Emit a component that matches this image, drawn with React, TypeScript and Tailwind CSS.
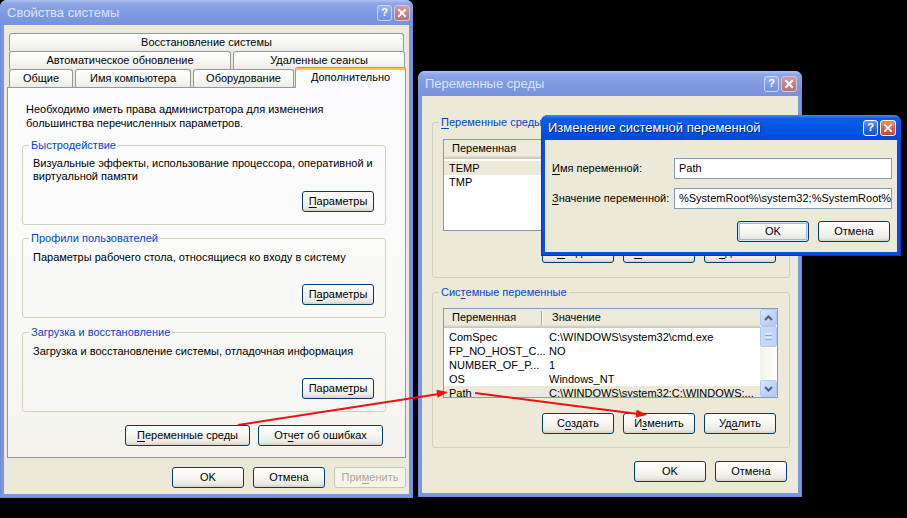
import type { ReactNode } from 'react'

// Windows XP style "System Properties" + "Environment Variables" screenshot recreation

function U({ children }: { children: ReactNode }) {
  return <span className="underline decoration-1 underline-offset-[2px]">{children}</span>
}

interface BtnProps {
  children: ReactNode
  className?: string
  disabled?: boolean
  isDefault?: boolean
}

function XpButton({ children, className = '', disabled = false, isDefault = false }: BtnProps) {
  const skin = disabled
    ? 'border-[#c9c7ba] bg-[#f5f4ea] text-[#aca899]'
    : 'border-[#003c74] bg-[linear-gradient(180deg,#ffffff_0%,#f5f4ef_55%,#ebe9e1_85%,#d6d0c5_100%)] text-black'
  const ring = isDefault ? 'shadow-[inset_0_0_0_1px_#cee7ff,inset_0_0_0_2px_#98b8ea]' : ''
  return (
    <div
      className={`flex h-[21px] shrink-0 items-center justify-center rounded-[3px] border ${skin} ${ring} ${className}`}
    >
      <span>{children}</span>
    </div>
  )
}

function TitleButtons({ active }: { active: boolean }) {
  const help = active
    ? 'border-white bg-[linear-gradient(180deg,#5f93f5_0%,#2a64e2_60%,#1d52d2_100%)]'
    : 'border-[#c9d5f5] bg-[linear-gradient(180deg,#9db4f0_0%,#7d99e5_60%,#7590e0_100%)]'
  const close = active
    ? 'border-white bg-[linear-gradient(180deg,#f08a6c_0%,#e0573a_60%,#cc4325_100%)]'
    : 'border-[#dcc4cc] bg-[linear-gradient(180deg,#d79ca3_0%,#c47b84_60%,#bb717b_100%)]'
  return (
    <div className="flex gap-[2px]">
      <div
        className={`flex h-[16px] w-[15px] items-center justify-center rounded-[3px] border text-[11px] font-bold leading-none text-white ${help}`}
      >
        ?
      </div>
      <div className={`flex h-[16px] w-[16px] items-center justify-center rounded-[3px] border ${close}`}>
        <svg width="10" height="10" viewBox="0 0 10 10">
          <path d="M2 2 L8 8 M8 2 L2 8" stroke="white" strokeWidth="2" strokeLinecap="square" />
        </svg>
      </div>
    </div>
  )
}

interface WindowProps {
  title: string
  active?: boolean
  className?: string
  btnPad?: string
  children: ReactNode
}

function XpWindow({ title, active = false, className = '', btnPad = 'pr-[5px]', children }: WindowProps) {
  const frame = active ? 'bg-[#0a4ee0] shadow-[inset_0_0_0_1px_#0831d9]' : 'bg-[#7a96df] shadow-[inset_0_0_0_1px_#6f8bd9]'
  const bar = active
    ? 'bg-[linear-gradient(180deg,#3d8cf5_0%,#0a5ee8_14%,#0055e5_55%,#004bdc_90%,#0a46d0_100%)]'
    : 'bg-[linear-gradient(180deg,#b0c2f2_0%,#8ea6e7_14%,#7e99e1_55%,#7893de_100%)]'
  const titleText = active ? 'text-white [text-shadow:1px_1px_#0a1883]' : 'text-[#d8e4f8]'
  return (
    <div className={`absolute flex flex-col rounded-t-[7px] ${frame} ${className}`}>
      <div className={`flex h-[25px] shrink-0 items-center justify-between rounded-t-[7px] pl-[7px] ${btnPad} ${bar}`}>
        <span className={`text-[13px] leading-none ${titleText}`}>{title}</span>
        <TitleButtons active={active} />
      </div>
      <div className="mx-[4px] mb-[4px] flex flex-1 flex-col bg-[#ece9d8]">{children}</div>
    </div>
  )
}

function Tab({ children, className = '' }: { children: ReactNode; className?: string }) {
  return (
    <div
      className={`flex h-[18px] shrink-0 items-center justify-center rounded-t-[3px] border-x border-t border-[#919b9c] bg-[linear-gradient(180deg,#ffffff_0%,#f7f6f2_60%,#ecebe6_100%)] ${className}`}
    >
      {children}
    </div>
  )
}

function Group({ label, className = '', children }: { label: ReactNode; className?: string; children: ReactNode }) {
  return (
    <fieldset className={`flex flex-col rounded-[3px] border border-[#d0d0bf] pl-[10px] pr-[11px] ${className}`}>
      <legend className="ml-[-4px] px-[2px] leading-[14px] text-[#0046d5]">{label}</legend>
      {children}
    </fieldset>
  )
}

function ScrollArrow({ up }: { up: boolean }) {
  return (
    <div className="flex h-[17px] w-[17px] shrink-0 items-center justify-center rounded-[2px] border border-[#b4c8f6] bg-[linear-gradient(135deg,#dce7fd_0%,#c3d4fb_50%,#b3c8f5_100%)]">
      <svg width="9" height="6" viewBox="0 0 9 6">
        <path d={up ? 'M1 5 L4.5 1.5 L8 5' : 'M1 1 L4.5 4.5 L8 1'} stroke="#4d6185" strokeWidth="2" fill="none" />
      </svg>
    </div>
  )
}

function ScrollBar() {
  return (
    <div className="flex w-[17px] shrink-0 flex-col bg-[linear-gradient(90deg,#f3f1ec_0%,#fefefb_100%)]">
      <ScrollArrow up />
      <div className="flex h-[21px] shrink-0 flex-col items-center justify-center gap-[1px] rounded-[2px] border border-[#b4c8f6] bg-[linear-gradient(90deg,#cad8fc_0%,#c1d3fb_100%)]">
        <div className="h-[1px] w-[7px] bg-[#eef4fe]" />
        <div className="h-[1px] w-[7px] bg-[#8ca7e6]" />
        <div className="h-[1px] w-[7px] bg-[#eef4fe]" />
        <div className="h-[1px] w-[7px] bg-[#8ca7e6]" />
      </div>
      <div className="flex-1" />
      <ScrollArrow up={false} />
    </div>
  )
}

interface ListProps {
  rows: [string, string][]
  selected: number
  className?: string
  scroll?: boolean
}

function ListView({ rows, selected, className = '', scroll = false }: ListProps) {
  return (
    <div className={`flex overflow-hidden border border-[#7f9db9] bg-white ${className}`}>
      <div className="flex min-w-0 flex-1 flex-col">
        <div className="flex h-[19px] shrink-0 items-center bg-[#ebeadb] shadow-[inset_0_-1px_#cbc7b8,inset_0_-2px_#d6d2c2,inset_0_-3px_#e2decd]">
          <div className="flex h-full w-[97px] shrink-0 items-center pb-[2px] pl-[8px]">Переменная</div>
          <div className="mb-[2px] h-[14px] w-[1px] bg-[#aca899]" />
          <div className="mb-[2px] h-[14px] w-[1px] bg-white" />
          <div className="flex h-full flex-1 items-center pb-[2px] pl-[9px]">Значение</div>
        </div>
        <div className="flex flex-col pt-[2px]">
          {rows.map(([name, value], i) => (
            <div
              key={name}
              className={`flex h-[14px] shrink-0 items-center whitespace-nowrap ${i === selected ? 'bg-[#ece9d8]' : ''}`}
            >
              <div className="w-[99px] shrink-0 pl-[5px]">{name}</div>
              <div className="min-w-0 flex-1 overflow-hidden pl-[6px]">{value}</div>
            </div>
          ))}
        </div>
      </div>
      {scroll && <ScrollBar />}
    </div>
  )
}

function TextBox({ children }: { children: ReactNode }) {
  return (
    <div className="flex h-[21px] w-[218px] shrink-0 items-center overflow-hidden whitespace-nowrap border border-[#7f9db9] bg-white pl-[4px]">
      {children}
    </div>
  )
}

const userRows: [string, string][] = [
  ['TEMP', '%USERPROFILE%\\Local Settings\\Temp'],
  ['TMP', '%USERPROFILE%\\Local Settings\\Temp']
]

const systemRows: [string, string][] = [
  ['ComSpec', 'C:\\WINDOWS\\system32\\cmd.exe'],
  ['FP_NO_HOST_C...', 'NO'],
  ['NUMBER_OF_P...', '1'],
  ['OS', 'Windows_NT'],
  ['Path', 'C:\\WINDOWS\\system32;C:\\WINDOWS;...']
]

export default function App() {
  return (
    <div className="relative h-[518px] w-[907px] overflow-hidden bg-black font-['Liberation_Sans',Arial,sans-serif] text-[11px] leading-[13px] text-black">
      {/* Свойства системы */}
      <XpWindow title="Свойства системы" className="left-0 top-0 h-[498px] w-[413px]" btnPad="pr-[3px]">
        <div className="flex flex-col px-[3px] pt-[8px]">
          <div className="flex flex-col">
            <div className="flex h-[18px]">
              <Tab className="ml-[2px] w-[395px]">Восстановление системы</Tab>
            </div>
            <div className="flex h-[18px] gap-[2px]">
              <Tab className="ml-[2px] w-[222px]">Автоматическое обновление</Tab>
              <Tab className="w-[172px]">Удаленные сеансы</Tab>
            </div>
            <div className="flex h-[18px] items-end gap-[2px]">
              <Tab className="ml-[2px] w-[64px]">Общие</Tab>
              <Tab className="w-[116px]">Имя компьютера</Tab>
              <Tab className="w-[101px]">Оборудование</Tab>
              <div className="relative z-10 -mb-[1px] ml-[-1px] flex h-[21px] w-[111px] items-start justify-center rounded-t-[3px] border-x border-t border-x-[#919b9c] border-t-[#e68b2c] bg-[#fcfcfe] pt-[3px] shadow-[inset_0_2px_#ffc83c]">
                Дополнительно
              </div>
            </div>
          </div>
          <div className="flex h-[371px] flex-col border border-[#919b9c] bg-[linear-gradient(180deg,#fcfcfe_0%,#f9f9f7_60%,#f4f3ee_100%)] pl-[14px] pt-[14px]">
            <p className="pl-[4px] leading-[14px]">
              Необходимо иметь права администратора для изменения
              <br />
              большинства перечисленных параметров.
            </p>
            <Group label="Быстродействие" className="mt-[8px] w-[364px] pb-[12px]">
              <p className="mt-[5px]">
                Визуальные эффекты, использование процессора, оперативной и
                <br />
                виртуальной памяти
              </p>
              <XpButton className="mt-[8px] w-[72px] self-end">
                <U>П</U>араметры
              </XpButton>
            </Group>
            <Group label="Профили пользователей" className="mt-[6px] w-[364px] pb-[12px]">
              <p className="mt-[6px]">Параметры рабочего стола, относящиеся ко входу в систему</p>
              <XpButton className="mt-[20px] w-[72px] self-end">
                П<U>а</U>раметры
              </XpButton>
            </Group>
            <Group label="Загрузка и восстановление" className="mt-[7px] w-[364px] pb-[12px]">
              <p className="mt-[6px]">Загрузка и восстановление системы, отладочная информация</p>
              <XpButton className="mt-[20px] w-[72px] self-end">
                Параме<U>т</U>ры
              </XpButton>
            </Group>
            <div className="mt-[13px] flex justify-end gap-[8px] pr-[22px]">
              <XpButton className="w-[125px]">
                <U>П</U>еременные среды
              </XpButton>
              <XpButton className="w-[125px]">
                От<U>ч</U>ет об ошибках
              </XpButton>
            </div>
          </div>
          <div className="mt-[9px] flex justify-end gap-[9px]">
            <XpButton className="w-[72px]">OK</XpButton>
            <XpButton className="w-[72px]">Отмена</XpButton>
            <XpButton className="w-[72px]" disabled>
              При<U>м</U>енить
            </XpButton>
          </div>
        </div>
      </XpWindow>

      {/* Переменные среды */}
      <XpWindow title="Переменные среды" className="left-[418px] top-[71px] h-[426px] w-[384px]">
        <div className="flex flex-col pl-[10px] pr-[8px]">
          <Group
            label={
              <>
                <U>П</U>еременные среды пользователя для Admin
              </>
            }
            className="mt-[19px] pb-[14px]"
          >
            <ListView rows={userRows} selected={0} className="mt-[10px] h-[92px]" />
            <div className="mt-[11px] flex justify-end gap-[9px] pr-[2px]">
              <XpButton className="w-[72px]">
                <U>С</U>оздать
              </XpButton>
              <XpButton className="w-[72px]">
                <U>И</U>зменить
              </XpButton>
              <XpButton className="w-[72px]">
                <U>У</U>далить
              </XpButton>
            </div>
          </Group>
          <Group
            label={
              <>
                Сис<U>т</U>емные переменные
              </>
            }
            className="mt-[7px] pb-[13px]"
          >
            <ListView rows={systemRows} selected={4} scroll className="mt-[9px] h-[90px]" />
            <div className="mt-[15px] flex justify-end gap-[9px] pr-[2px]">
              <XpButton className="w-[72px]">
                С<U>о</U>здать
              </XpButton>
              <XpButton className="w-[72px]">
                И<U>з</U>менить
              </XpButton>
              <XpButton className="w-[72px]">
                Уд<U>а</U>лить
              </XpButton>
            </div>
          </Group>
          <div className="mt-[13px] flex justify-end gap-[9px] pr-[3px]">
            <XpButton className="w-[72px]">OK</XpButton>
            <XpButton className="w-[72px]">Отмена</XpButton>
          </div>
        </div>
      </XpWindow>

      {/* Изменение системной переменной */}
      <XpWindow title="Изменение системной переменной" active className="left-[541px] top-[115px] z-10 h-[141px] w-[360px]">
        <div className="flex flex-col pl-[7px] pr-[5px] pt-[18px]">
          <div className="flex items-center">
            <span className="w-[122px] shrink-0">
              <U>И</U>мя переменной:
            </span>
            <TextBox>Path</TextBox>
          </div>
          <div className="mt-[9px] flex items-center">
            <span className="w-[122px] shrink-0">
              <U>З</U>начение переменной:
            </span>
            <TextBox>{'%SystemRoot%\\system32;%SystemRoot%;%SystemRoot%\\System32\\Wbem'}</TextBox>
          </div>
          <div className="mt-[12px] flex justify-end gap-[9px] pr-[2px]">
            <XpButton className="w-[72px]" isDefault>
              OK
            </XpButton>
            <XpButton className="w-[72px]">Отмена</XpButton>
          </div>
        </div>
      </XpWindow>

      {/* red annotation arrows */}
      <svg className="pointer-events-none absolute left-0 top-0 z-20" width="907" height="518" viewBox="0 0 907 518">
        <line x1="238" y1="425" x2="439" y2="394" stroke="#ee1111" strokeWidth="2" />
        <polygon points="448,392 437.7,397.7 436.5,389.7" fill="#ee1111" />
        <line x1="475" y1="393" x2="638" y2="414" stroke="#ee1111" strokeWidth="2" />
        <polygon points="647,415 635.6,417.6 636.6,409.6" fill="#ee1111" />
      </svg>
    </div>
  )
}
